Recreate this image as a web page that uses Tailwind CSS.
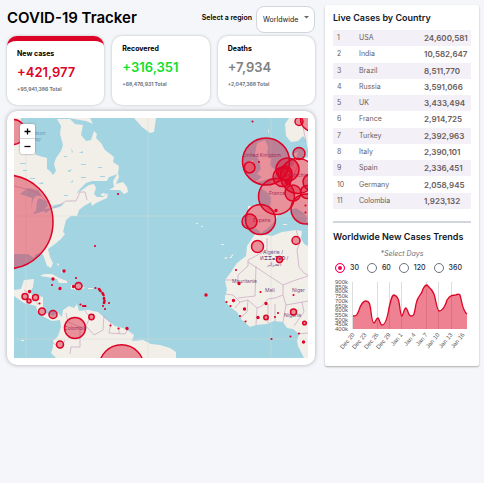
<!DOCTYPE html>
<html lang="en">
<head>
<meta charset="utf-8">
<title>COVID-19 Tracker</title>
<script src="https://cdn.jsdelivr.net/npm/@tailwindcss/browser@4"></script>
</head>
<body class="min-h-screen bg-[#f5f6fa] font-[Inter,sans-serif] text-black">
<div class="grid grid-cols-[2fr_1fr] items-start gap-[10px] pt-[5px] pr-[5px] pl-[7px]">
  <main class="min-w-0">
    <header class="flex h-[27px] items-center justify-between">
      <h1 class="text-[15px] font-semibold whitespace-nowrap">COVID-19 Tracker</h1>
      <div class="flex items-center gap-1">
        <label for="region" class="text-[7px] font-semibold">Select a region</label>
        <div class="relative">
          <select id="region" class="h-[27px] w-[59px] appearance-none rounded-lg border border-gray-300 bg-white pl-[6px] text-[7px] text-gray-900"><option>Worldwide</option></select>
          <svg class="pointer-events-none absolute top-[12px] right-[6px] h-[3px] w-[5px]" viewBox="0 0 5 3"><path d="M0 0h5L2.500 2.500z" fill="#666"/></svg>
        </div>
      </div>
    </header>

    <section class="mt-[4px] grid grid-cols-3 gap-[8px]" aria-label="Statistics">
      <article class="h-[69px] rounded-[10px] border-t-[5px] border-[#dd0426] bg-white px-[10px] pt-[8px] shadow-[0_0_3px_#bbb]">
        <h2 class="text-[7px] leading-[10px] font-bold">New cases</h2>
        <p class="mt-[5px] text-[13px] leading-[16px] font-semibold text-[#dd0426]">+421,977</p>
        <p class="mt-[5px] text-[5px] leading-[8px] font-bold text-[#6c757d]">+95,941,386 Total</p>
      </article>
      <article class="h-[69px] rounded-[10px] bg-white px-[10px] pt-[8px] shadow-[0_0_3px_#bbb]">
        <h2 class="text-[7px] leading-[10px] font-bold">Recovered</h2>
        <p class="mt-[5px] text-[13px] leading-[16px] font-semibold text-[#10df2e]">+316,351</p>
        <p class="mt-[5px] text-[5px] leading-[8px] font-bold text-[#6c757d]">+68,476,931 Total</p>
      </article>
      <article class="h-[69px] rounded-[10px] bg-white px-[10px] pt-[8px] shadow-[0_0_3px_#bbb]">
        <h2 class="text-[7px] leading-[10px] font-bold">Deaths</h2>
        <p class="mt-[5px] text-[13px] leading-[16px] font-semibold text-[#808080]">+7,934</p>
        <p class="mt-[5px] text-[5px] leading-[8px] font-bold text-[#6c757d]">+2,047,368 Total</p>
      </article>
    </section>

    <section class="relative mt-[6px] rounded-[10px] bg-white p-[7px] shadow-[0_0_4px_#aaa]" aria-label="Map">
      <svg class="block h-[240px] w-full bg-[#a3d4e1]" viewBox="14 118 294 240" preserveAspectRatio="xMidYMid slice">
        <g fill="#f2efe9">
          <path d="M14 118H21L20 144 28 150 35 152 36 155 47 158 47 169 50 171 53 175 56 171 54 164 56 158 61 151 63 145 60 134 61 126 57 119H70L75 124 83 125 81 135 86 141 91 140 94 131 97 134 96 138 101 143 105 150 114 157 113 162 119 166 118 174 109 177 107 181 92 181 86 183 80 189 76 194 82 190 89 185 94 184 96 188 94 194 97 197 103 197 108 193 107 198 96 203 92 206 91 202 84 206 79 210 77 216 71 216 66 220 64 228 63 232 65 234 61 239 55 244 48 249 50 257 53 263 51 268 47 266 44 257 42 253 36 254 34 258 28 254 14 254Z"/>
          <path d="M14 290 21 289 24 280 34 279 33 287 30 292 31 294 43 297 43 308 46 313 53 316 58 313 62 317 63 310 69 306 74 308 77 304 79 311 88 310 98 312 107 320 115 326 126 329 134 335 132 341 143 340 151 344 160 345 170 348 176 352 176 358H56L51 353 53 347 53 341 58 336 61 327 60 320 52 321 44 317 38 313 36 306 24 303 14 296Z"/>
          <path d="M40 276 44 274 52 274 59 278 67 281 67 283 59 283 57 279 47 277ZM71 285 79 284 85 288 79 290 71 289ZM88 288h5v1h-5zM57 287l6 1-2 1zM57 263l2 1-1 3zM61 268l1 5-1 0zM109 190 114 187 113 181 118 173 119 177 116 184 123 182 127 187 128 192 124 194 120 190ZM100 195l3-2 4 1-4 2zM134 118H156L154 132 150 133 142 127ZM68 118 90 118 93 124 86 121Z"/>
          <path d="M308 118H289L285 124 286 136 291 142 298 141 303 136 306 140 308 150ZM308 157 300 160 296 158 298 152 293 154 294 165 286 169 281 174 276 180 271 181 270 185 261 186 262 189 268 193 271 198 270 207 261 206 248 206 248 215 246 224 250 227 257 229 261 233 268 228 274 222 278 215 283 212 290 210 296 208 304 213 308 219Z"/>
          <path d="M257 143 265 140 268 147 267 153 271 159 270 165 277 172 274 177 262 181 255 182 262 177 257 174 261 169 259 160 255 154ZM246 163 253 160 254 170 246 174ZM268 129l1 2-1 2zM283 224h4v1h-4zM306 220l2-1v4z"/>
          <path d="M255 234 260 234 272 236 282 232 296 230 302 231 301 238 304 244 308 246V358H304L298 346 297 341 299 334 293 329 287 328 283 322 274 321 267 324 256 325 250 327 241 319 237 312 230 307 225 301 225 296 227 290 225 280 231 272 237 263 246 256 247 246Z"/>
          <path d="M221 244h3v1h-3zM223 258l4-1v2zM229 258l3-2v2zM231 256l2-2v2zM196 223h2v1h-2zM201 226h2v1h-2zM21 340h3v1h-3z"/>
        </g>
        <g fill="#a3d4e1">
          <path d="M20 194 28 188 38 190 42 196 36 196 33 199 31 211 33 213 36 211 37 201 39 198 46 201 48 206 44 209 52 208 54 205 62 204 65 203 60 207 51 209 46 213 44 211 34 214 31 211 32 198Z"/>
          <path d="M64 156h3v1h-3zM71 148l2 4-1 1zM79 153l4-2v2zM88 155l1 5zM67 171l5-2-2 3zM81 164h5v1h-5zM92 168l3 2zM70 183l3-3v2zM81 177h5v1h-5zM98 167h4v1h-4zM23 170h4v1h-4zM30 178h5v1h-5zM20 163h6v1h-6zM38 184l5-2v2zM64 195h4v1h-4zM100 176h5v1h-5zM74 138l3 2zM36 301l2 3-1 1z"/>
        </g>
        <path fill="none" stroke="#d5d9d5" stroke-width=".5" d="M26 118V358M148 118V358M271 118V358M14 216H308M14 339H308"/>
        <path fill="none" stroke="#c7a5c0" stroke-width=".7" d="M14 186 26 189 38 193 49 204 54 208 66 201 76 201 80 192 85 192 87 200M24 290 30 294M31 302 37 299M66 313 68 322 80 327 80 347 71 347 70 354M85 311 90 317 86 326 94 335 103 330 104 316 111 323 109 333 125 334 128 329M52 342 61 349 65 340M119 327 119 334M225 280H238V275L248 266V260L267 250V238M248 262 283 285 293 281 308 276M283 285 283 295 275 298 268 299 262 306 257 308M256 266 255 296 238 298M225 294 233 295 240 302 248 300 257 308 256 325M296 230 300 242 297 250 299 267 304 273 308 275M283 295 286 305 308 301M268 304V323M275 304 275 321M286 305 283 322M302 302 304 312 294 326M303 127 306 142M297 334 308 333M240 302 235 308M248 300 247 312 240 318M298 165 294 175 287 183M266 208 276 212"/>
        <g fill="#765083" font-family="Inter, sans-serif" font-size="5">
          <text x="243" y="157">United Kingdom</text>
          <text x="269" y="195">France</text>
          <text x="284" y="177">Deutschland</text>
          <text x="253" y="222">España</text>
          <text x="263" y="254">Algérie /</text>
          <text x="260" y="260">ⵍⵣⵣⴰⵢⴻⵔ /</text>
          <text x="267" y="266">الجزائر</text>
          <text x="232" y="283">Mauritanie</text>
          <text x="265" y="292">Mali</text>
          <text x="292" y="292">Niger</text>
          <text x="284" y="317">Nigeria</text>
          <text x="64" y="330">Colombia</text>
          <g fill="#6598c0" font-style="italic"><text x="27" y="135">Hudson</text><text x="32" y="141">Bay</text></g>
        </g>
        <g fill="#dd0426" fill-opacity=".4" stroke="#dd0426" stroke-width="1.500">
          <circle cx="6" cy="222" r="47"/><circle cx="13" cy="132" r="12.500"/>
          <circle cx="266" cy="161.500" r="23.500"/><circle cx="249.500" cy="167.500" r="5.500"/>
          <circle cx="298" cy="176" r="17.500"/><circle cx="287.500" cy="169.500" r="11.500"/>
          <circle cx="282.500" cy="177" r="9.500"/><circle cx="285" cy="173" r="7"/><circle cx="288" cy="182" r="2.500"/>
          <circle cx="276.500" cy="196.500" r="18"/><circle cx="293" cy="193" r="8"/>
          <circle cx="306" cy="209" r="15"/><circle cx="307" cy="192" r="6.500"/><circle cx="311" cy="182" r="8"/>
          <circle cx="299" cy="153.500" r="6"/><circle cx="299" cy="121.500" r="4"/><circle cx="313" cy="119" r="12.500"/>
          <circle cx="260.500" cy="219.500" r="15"/><circle cx="249.500" cy="221.500" r="7.500"/>
          <circle cx="257.500" cy="246.500" r="6"/><circle cx="296" cy="240.500" r="4"/><circle cx="279.500" cy="259.500" r="3"/>
          <circle cx="293.500" cy="312" r="3"/><circle cx="266" cy="317.500" r="2.200"/><circle cx="304.500" cy="323" r="1.800"/>
          <circle cx="78.500" cy="286" r="3.500"/><circle cx="25" cy="296.500" r="3"/><circle cx="29" cy="301" r="2"/>
          <circle cx="35.500" cy="297.500" r="3"/><circle cx="42" cy="311.500" r="3.500"/><circle cx="53" cy="314.500" r="4"/>
          <circle cx="75" cy="328" r="10.500"/><circle cx="91.500" cy="317" r="2.700"/><circle cx="60" cy="344.500" r="3.500"/>
          <circle cx="121.500" cy="367" r="22.300"/>
        </g>
        <g fill="none" stroke="#dd0426" stroke-linecap="round">
          <path stroke-width="2.200" d="M252.500 121.500h0M259 162h0M305.500 205.500h0M305.500 212.500h0M236 270h0M226.500 302h0M230.500 306h0M240 316h0M245.500 321.500h0M260.500 292h0M275 317h0M278 313h0M293.500 295h0M299 333.500h0M290.500 336.500h0M271.500 339h0M95 246h0M52 285h0M76 278h0M39.500 303.500h0M110.500 325.500h0M118.500 328.500h0M95.500 288h0M103 306h0M109 303h0M105 309h0M80.500 304.500h0M83 306h2.500M118 194h0"/>
          <path stroke-width="3.400" d="M276 210.500h0M239 283.500h0M206 295h0M233.500 300.500h0M244.500 309h0M266 303.500h0M258 317.500h0M303.500 342h0M64 271h0M53 279h0M60 288.500h0M73.500 286.500h0M29.500 291.500h0M127 328.500h0"/>
          <path stroke-width="2.600" d="M99 289l1.500 2M102.500 293l1 2M104 298v1M104.500 301l-.5 2"/>
        </g>
      </svg>
      <div class="absolute top-[13px] left-[13px] flex w-[15px] flex-col divide-y divide-gray-300 rounded-[2px] bg-white shadow-[0_0_2px_#777]">
        <button type="button" aria-label="Zoom in" class="flex h-[15px] items-center justify-center"><svg class="size-[7px]" viewBox="0 0 7 7"><path d="M3.500 .5v6M.5 3.500h6" stroke="#000" stroke-width="1.300"/></svg></button>
        <button type="button" aria-label="Zoom out" class="flex h-[15px] items-center justify-center"><svg class="size-[7px]" viewBox="0 0 7 7"><path d="M.5 3.500h6" stroke="#000" stroke-width="1.300"/></svg></button>
      </div>
    </section>
  </main>

  <aside class="min-w-0 rounded-[2px] bg-white px-[8px] pt-[7px] pb-[14px] shadow-[0_1px_2px_#aaa]">
    <h2 class="text-[9px] leading-[12px] font-semibold whitespace-nowrap text-gray-900">Live Cases by Country</h2>
    <table class="mt-[6px] h-[179px] w-full text-left text-[7px] leading-[10px] text-[#6a5d5d]">
      <tbody>
        <tr class="odd:bg-[#f3f0f7]"><td class="w-[22px] pl-[4px]">1</td><td class="pl-[4px]">USA</td><td class="w-[51px] pl-[4px] text-[8px] font-semibold">24,600,581</td></tr>
        <tr class="odd:bg-[#f3f0f7]"><td class="pl-[4px]">2</td><td class="pl-[4px]">India</td><td class="pl-[4px] text-[8px] font-semibold">10,582,647</td></tr>
        <tr class="odd:bg-[#f3f0f7]"><td class="pl-[4px]">3</td><td class="pl-[4px]">Brazil</td><td class="pl-[4px] text-[8px] font-semibold">8,511,770</td></tr>
        <tr class="odd:bg-[#f3f0f7]"><td class="pl-[4px]">4</td><td class="pl-[4px]">Russia</td><td class="pl-[4px] text-[8px] font-semibold">3,591,066</td></tr>
        <tr class="odd:bg-[#f3f0f7]"><td class="pl-[4px]">5</td><td class="pl-[4px]">UK</td><td class="pl-[4px] text-[8px] font-semibold">3,433,494</td></tr>
        <tr class="odd:bg-[#f3f0f7]"><td class="pl-[4px]">6</td><td class="pl-[4px]">France</td><td class="pl-[4px] text-[8px] font-semibold">2,914,725</td></tr>
        <tr class="odd:bg-[#f3f0f7]"><td class="pl-[4px]">7</td><td class="pl-[4px]">Turkey</td><td class="pl-[4px] text-[8px] font-semibold">2,392,963</td></tr>
        <tr class="odd:bg-[#f3f0f7]"><td class="pl-[4px]">8</td><td class="pl-[4px]">Italy</td><td class="pl-[4px] text-[8px] font-semibold">2,390,101</td></tr>
        <tr class="odd:bg-[#f3f0f7]"><td class="pl-[4px]">9</td><td class="pl-[4px]">Spain</td><td class="pl-[4px] text-[8px] font-semibold">2,336,451</td></tr>
        <tr class="odd:bg-[#f3f0f7]"><td class="pl-[4px]">10</td><td class="pl-[4px]">Germany</td><td class="pl-[4px] text-[8px] font-semibold">2,058,945</td></tr>
        <tr class="odd:bg-[#f3f0f7]"><td class="pl-[4px]">11</td><td class="pl-[4px]">Colombia</td><td class="pl-[4px] text-[8px] font-semibold">1,923,132</td></tr>
      </tbody>
    </table>
    <hr class="mt-[12px] border-t-2 border-gray-300">
    <h2 class="mt-[8px] text-[9px] leading-[12px] font-semibold whitespace-nowrap text-gray-900">Worldwide New Cases Trends</h2>
    <fieldset>
      <legend class="mx-auto pt-[5px] text-[7px] leading-[12px] text-gray-500 italic">*Select Days</legend>
      <div class="mt-[3px] flex gap-[8px] pl-[2px] text-[7px] leading-[10px] font-medium text-gray-800">
        <label class="flex items-center gap-[5px]"><input type="radio" name="days" checked class="size-[10px] appearance-none rounded-full border border-gray-500 bg-white checked:border-[#f50057] checked:bg-[#f50057] checked:shadow-[inset_0_0_0_2px_white]">30</label>
        <label class="flex items-center gap-[5px]"><input type="radio" name="days" class="size-[10px] appearance-none rounded-full border border-gray-500 bg-white checked:border-[#f50057] checked:bg-[#f50057] checked:shadow-[inset_0_0_0_2px_white]">60</label>
        <label class="flex items-center gap-[5px]"><input type="radio" name="days" class="size-[10px] appearance-none rounded-full border border-gray-500 bg-white checked:border-[#f50057] checked:bg-[#f50057] checked:shadow-[inset_0_0_0_2px_white]">120</label>
        <label class="flex items-center gap-[5px]"><input type="radio" name="days" class="size-[10px] appearance-none rounded-full border border-gray-500 bg-white checked:border-[#f50057] checked:bg-[#f50057] checked:shadow-[inset_0_0_0_2px_white]">360</label>
      </div>
    </fieldset>
    <svg class="mt-[5px] block w-full" viewBox="333 278 138 74" role="img" aria-label="New cases, last 30 days">
      <path d="M352.500 282V329M377.500 282V329M389.500 282V329M401.500 282V329M426.500 282V329M438.500 282V329M451.500 282V329" stroke="#ddd"/>
      <path d="M353 316C357 316 357 315 359 310C361 304 364 301 366 301C369 301 370 303 371 312C372 320 373 323 374 323C376 322 376 318 378 318C380 320 380 325 382 325C385 325 387 320 389 308C391 299 392 295 394 295C398 296 399 300 400 309C401 315 401 316 402 316C404 313 404 308 406 308C408 309 408 316 411 316C414 316 414 315 416 304C418 294 421 297 423 289C425 285 426 285 427 285C429 287 432 289 434 294C436 300 437 311 439 311C443 311 446 304 447 300C450 295 453 295 456 295C457 294 459 294 460 295C462 301 462 310 467 314V329H353Z" fill="#dd0426" fill-opacity=".5"/>
      <path d="M353 316C357 316 357 315 359 310C361 304 364 301 366 301C369 301 370 303 371 312C372 320 373 323 374 323C376 322 376 318 378 318C380 320 380 325 382 325C385 325 387 320 389 308C391 299 392 295 394 295C398 296 399 300 400 309C401 315 401 316 402 316C404 313 404 308 406 308C408 309 408 316 411 316C414 316 414 315 416 304C418 294 421 297 423 289C425 285 426 285 427 285C429 287 432 289 434 294C436 300 437 311 439 311C443 311 446 304 447 300C450 295 453 295 456 295C457 294 459 294 460 295C462 301 462 310 467 314" fill="none" stroke="#dd0426" stroke-width="1.300"/>
      <g font-family="Liberation Sans, sans-serif" font-size="6" fill="#555" text-anchor="end">
        <text x="348" y="284">900k</text><text x="348" y="289">850k</text><text x="348" y="293">800k</text><text x="348" y="298">750k</text><text x="348" y="303">700k</text><text x="348" y="308">650k</text><text x="348" y="312">600k</text><text x="348" y="317">550k</text><text x="348" y="322">500k</text><text x="348" y="326">450k</text><text x="348" y="331">400k</text>
        <text transform="translate(355 335) rotate(-50)">Dec 20</text><text transform="translate(367 335) rotate(-50)">Dec 23</text><text transform="translate(379 335) rotate(-50)">Dec 26</text><text transform="translate(391 335) rotate(-50)">Dec 29</text><text transform="translate(403 335) rotate(-50)">Jan 1</text><text transform="translate(416 335) rotate(-50)">Jan 4</text><text transform="translate(428 335) rotate(-50)">Jan 7</text><text transform="translate(440 335) rotate(-50)">Jan 10</text><text transform="translate(453 335) rotate(-50)">Jan 13</text><text transform="translate(465 335) rotate(-50)">Jan 16</text>
      </g>
    </svg>
  </aside>
</div>
</body>
</html>
